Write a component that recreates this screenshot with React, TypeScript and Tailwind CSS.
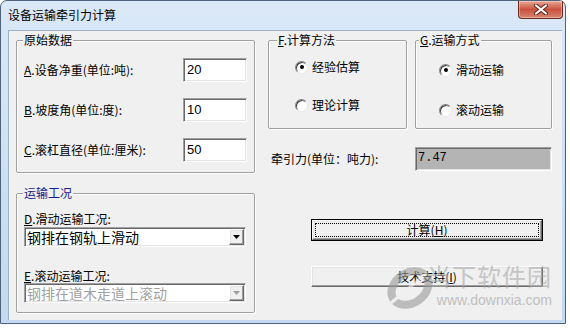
import React from "react";

const cjk = "font-['Tahoma','Noto_Sans_CJK_SC',sans-serif]";
const sunken =
  "border border-t-[#a0a0a0] border-l-[#a0a0a0] border-r-white border-b-white shadow-[inset_1px_1px_0_#696969,inset_-1px_-1px_0_#e3e3e3]";
const raised =
  "border border-t-white border-l-white border-r-[#696969] border-b-[#696969] shadow-[inset_-1px_-1px_0_#a0a0a0,inset_1px_1px_0_#e3e3e3]";

function Group({
  title,
  className,
  titleClass,
  children,
}: {
  title: React.ReactNode;
  className: string;
  titleClass: string;
  children: React.ReactNode;
}) {
  return (
    <div
      className={`relative rounded-[2px] border border-[#a0a0a0] shadow-[1px_1px_0_#fff,inset_1px_1px_0_#fff] ${className}`}
    >
      <span className={`absolute -top-[8px] bg-[#f0f0f0] px-[1px] text-[12px] leading-[14px] ${titleClass}`}>
        {title}
      </span>
      {children}
    </div>
  );
}

function Radio({ checked, label }: { checked?: boolean; label: string }) {
  return (
    <div className="flex h-[14px] items-center gap-[4px]">
      <span className="flex h-[13px] w-[13px] items-center justify-center rounded-full border border-t-[#808080] border-l-[#808080] border-r-[#e8e8e8] border-b-[#e8e8e8] bg-white shadow-[inset_1px_1px_0_#404040]">
        {checked && <span className="h-[4px] w-[4px] rounded-full bg-black" />}
      </span>
      <span className="text-[12px] leading-[14px]">{label}</span>
    </div>
  );
}

function Field({ label, value }: { label: React.ReactNode; value: string }) {
  return (
    <div className="flex h-[24px] items-center justify-between">
      <span className="text-[12px] leading-[14px]">{label}</span>
      <div className={`h-[24px] w-[64px] bg-white pl-[3px] pt-[3px] font-['Liberation_Sans',sans-serif] text-[13px] leading-[16px] ${sunken}`}>
        {value}
      </div>
    </div>
  );
}

function Combo({ text, disabled }: { text: string; disabled?: boolean }) {
  return (
    <div className={`flex h-[20px] w-[222px] items-center justify-between bg-white pl-[2px] pr-[1px] ${sunken}`}>
      <span className={`text-[14px] leading-[16px] ${disabled ? "text-[#a0a0a0]" : "text-black"}`}>{text}</span>
      <span className={`flex h-[16px] w-[15px] items-center justify-center bg-[#f0f0f0] ${raised}`}>
        <svg width="7" height="4" viewBox="0 0 7 4">
          <path d="M0 0h7L3.5 4z" fill={disabled ? "#a0a0a0" : "#000"} />
        </svg>
      </span>
    </div>
  );
}

export default function App() {
  return (
    <div className={`h-[329px] w-[570px] bg-white text-black ${cjk}`}>
      <div className="flex h-[324px] w-[566px] flex-col rounded-t-[7px] border border-[#4f6279] bg-gradient-to-b from-[#dae8f7] to-[#c3d9ef]">
        {/* title bar */}
        <div className="flex h-[29px] items-start justify-between">
          <span className="pl-[7px] pt-[7px] text-[12px] leading-[14px]">设备运输牵引力计算</span>
          <div className="mr-[2px] flex h-[18px] w-[45px] items-center justify-center rounded-b-[4px] border border-t-0 border-[#6b2a20] bg-gradient-to-b from-[#e6a898] via-[#c8513d] to-[#d88470] shadow-[inset_0_0_0_1px_rgba(255,255,255,0.35)]">
            <svg width="14" height="11" viewBox="0 0 14 11">
              <path d="M2 1.5l10 8M12 1.5l-10 8" stroke="#5a2218" strokeWidth="4" strokeLinecap="round" />
              <path d="M2 1.5l10 8M12 1.5l-10 8" stroke="#fff" strokeWidth="2.2" strokeLinecap="round" />
            </svg>
          </div>
        </div>

        {/* client area */}
        <div className="relative ml-[7px] flex h-[290px] w-[554px] items-start gap-[13px] border-t border-l border-[#9fb3c8] bg-[#f0f0f0] pl-[7px] pt-[9px]">
          {/* left column */}
          <div className="flex w-[239px] flex-col gap-[20px]">
            <Group title="原始数据" className="flex h-[133px] flex-col gap-[16px] px-[7px] pt-[17px]" titleClass="left-[6px]">
              <Field label={<><span className="underline">A</span>.设备净重(单位:吨):</>} value="20" />
              <Field label={<><span className="underline">B</span>.坡度角(单位:度):</>} value="10" />
              <Field label={<><span className="underline">C</span>.滚杠直径(单位:厘米):</>} value="50" />
            </Group>

            <Group title="运输工况" className="flex h-[120px] flex-col px-[7px] pt-[18px]" titleClass="left-[6px] text-[#14208a]">
              <span className="h-[14px] text-[12px] leading-[14px]">
                <span className="underline">D</span>.滑动运输工况:
              </span>
              <div className="mt-[1px]">
                <Combo text="钢排在钢轨上滑动" />
              </div>
              <span className="mt-[22px] h-[14px] text-[12px] leading-[14px]">
                <span className="underline">E</span>.滚动运输工况:
              </span>
              <div>
                <Combo text="钢排在道木走道上滚动" disabled />
              </div>
            </Group>
          </div>

          {/* right column */}
          <div className="flex w-[284px] flex-col">
            <div className="flex gap-[8px]">
              <Group
                title={<><span className="underline">F</span>.计算方法</>}
                className="flex h-[89px] w-[139px] flex-col gap-[24px] pl-[26px] pt-[19px]"
                titleClass="left-[8px]"
              >
                <Radio checked label="经验估算" />
                <Radio label="理论计算" />
              </Group>
              <Group
                title={<><span className="underline">G</span>.运输方式</>}
                className="flex h-[89px] w-[137px] flex-col gap-[26px] pl-[23px] pt-[22px]"
                titleClass="left-[3px]"
              >
                <Radio checked label="滑动运输" />
                <Radio label="滚动运输" />
              </Group>
            </div>

            <div className="mt-[18px] flex h-[24px] items-center justify-between">
              <span className="pl-[3px] text-[12px] leading-[14px]">牵引力(单位：吨力):</span>
              <div className={`h-[24px] w-[137px] bg-[#b4b4b4] pl-[2px] pt-[3px] font-['Liberation_Mono',monospace] text-[12px] leading-[14px] ${sunken}`}>
                7.47
              </div>
            </div>

            <div className="ml-[43px] mt-[48px] w-[232px] border border-black">
              <div className={`flex h-[20px] items-center justify-center bg-[#f0f0f0] p-[2px] ${raised}`}>
                <div className="flex h-full w-full items-center justify-center border border-dotted border-black text-[12px] leading-[14px]">
                  计算(<span className="underline">H</span>)
                </div>
              </div>
            </div>

            <div className={`ml-[43px] mt-[25px] flex h-[21px] w-[232px] items-center justify-center bg-[#f0f0f0] text-[12px] leading-[14px] ${raised}`}>
              技术支持(<span className="underline">I</span>)
            </div>
          </div>

          {/* watermark overlay */}
          <div className="pointer-events-none absolute left-[374px] top-[232px] flex items-start opacity-60">
            <svg width="56" height="48" viewBox="0 0 56 48">
              <ellipse cx="27" cy="25" rx="20" ry="15" transform="rotate(-35 27 25)" fill="none" stroke="#9a9a9a" strokeWidth="8" />
              <path d="M8 40 Q20 30 44 10" stroke="#f0f0f0" strokeWidth="3" fill="none" />
            </svg>
            <div className="-ml-[12px] flex flex-col items-end">
              <span className="text-[24px] leading-[26px] tracking-[1px] text-[#a9a9a9]">当下软件园</span>
              <span className="mt-[3px] font-['Liberation_Sans',sans-serif] text-[14px] leading-[16px] text-[#a0a0a0]">www.downxia.com</span>
            </div>
          </div>
        </div>
      </div>
    </div>
  );
}
